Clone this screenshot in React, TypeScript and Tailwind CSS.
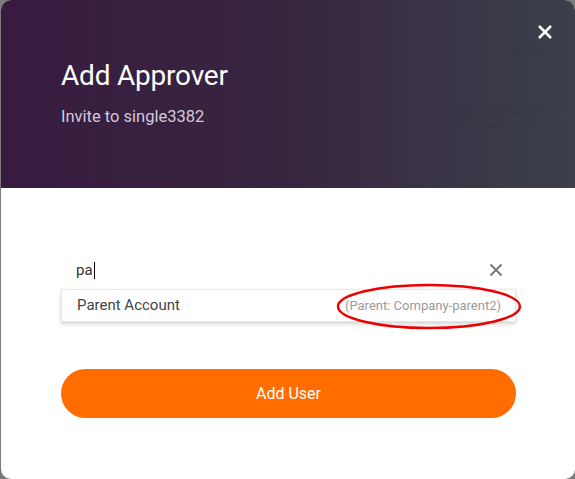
import React from "react";

export default function App() {
  return (
    <div className="w-[575px] h-[479px] bg-[#7a7a7a] pl-px" style={{ fontFamily: "Roboto, 'Open Sans', sans-serif" }}>
      <div className="relative w-full h-full rounded-[10px] overflow-hidden bg-white flex flex-col">
        <div className="relative h-[188px] bg-gradient-to-r from-[#381a3f] via-[#372640] to-[#3b404b] pl-[60px] pt-[58px]">
          <div className="absolute left-[511px] top-[41px] text-[13px] text-black/[0.08] tracking-wide">ROLE</div>
          <div className="absolute left-[454px] top-[101px] w-[125px] border-b border-black/[0.06] pb-[5px] text-[13px] text-black/[0.08]">
            Super Collaborator
          </div>
          <button className="absolute left-[535px] top-[23px] w-[18px] h-[18px] flex items-center justify-center">
            <svg width="16" height="16" viewBox="0 0 16 16">
              <path d="M2 2 L14 14 M14 2 L2 14" stroke="#ffffff" strokeWidth="2.6" strokeLinecap="butt" />
            </svg>
          </button>
          <h1 className="text-[28px] leading-[36px] text-white tracking-[-0.2px]">Add Approver</h1>
          <p className="mt-[13px] text-[16.5px] leading-[20px] text-[#d3c9da]">Invite to single3382</p>
        </div>
        <div className="flex-1 px-[60px] pt-[67px]">
          <div className="relative h-[31px] flex items-center pl-[15px]">
            <span className="text-[15px] text-[#333]">pa</span>
            <span className="w-px h-[17px] bg-black ml-px" />
            <svg className="absolute left-[428px] top-[8px]" width="14" height="14" viewBox="0 0 14 14">
              <path d="M1.5 1.5 L12.5 12.5 M12.5 1.5 L1.5 12.5" stroke="#777" strokeWidth="1.8" />
            </svg>
          </div>
          <div className="relative mt-[3px] h-[33px] w-[455px] bg-white border border-[#e6e6e6] shadow-[0_2px_4px_rgba(0,0,0,0.18)] flex items-center justify-between pl-[15px] pr-[14px]">
            <span className="text-[15px] text-[#444]">Parent Account</span>
            <span className="text-[13px] text-[#9a9a9a]">(Parent: Company-parent2)</span>
            <svg className="absolute left-[274px] top-[-7px]" width="186" height="47" viewBox="0 0 186 47">
              <ellipse cx="93" cy="23.5" rx="91" ry="21.5" fill="none" stroke="#ee0000" strokeWidth="2.5" />
            </svg>
          </div>
          <button className="mt-[47px] w-[455px] h-[49px] rounded-full bg-[#ff6c00] text-white text-[16px] flex items-center justify-center">
            Add User
          </button>
        </div>
      </div>
    </div>
  );
}
